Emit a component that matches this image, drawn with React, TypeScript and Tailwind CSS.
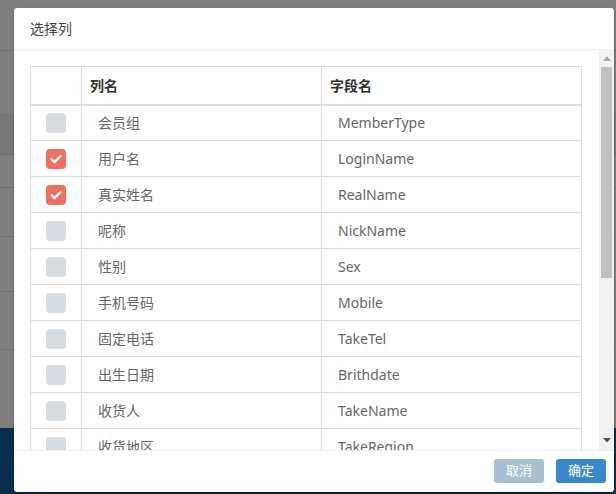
import React from "react";

const rows: Array<{ name: string; field: string; on?: boolean }> = [
  { name: "会员组", field: "MemberType" },
  { name: "用户名", field: "LoginName", on: true },
  { name: "真实姓名", field: "RealName", on: true },
  { name: "呢称", field: "NickName" },
  { name: "性别", field: "Sex" },
  { name: "手机号码", field: "Mobile" },
  { name: "固定电话", field: "TakeTel" },
  { name: "出生日期", field: "Brithdate" },
  { name: "收货人", field: "TakeName" },
  { name: "收货地区", field: "TakeRegion" },
  { name: "收货地址", field: "TakeAddress" },
  { name: "邮编", field: "TakeZip" },
];

function Check({ on }: { on?: boolean }) {
  return (
    <span className={"inline-flex w-5 h-5 rounded-[4px] items-center justify-center align-middle " + (on ? "bg-[#ef6f60]" : "bg-[#d8dde1]")}>
      {on && (
        <svg width="20" height="20" viewBox="0 0 20 20">
          <path d="M5.5 10.2l3 3L14.5 7.2" fill="none" stroke="#fff" strokeWidth="2.4" strokeLinecap="round" strokeLinejoin="round" />
        </svg>
      )}
    </span>
  );
}

export default function App() {
  return (
    <div className="relative w-[616px] h-[494px] overflow-hidden bg-[#7f7f7f]" style={{ fontFamily: '"Noto Sans", "Noto Sans CJK SC", sans-serif' }}>
      {/* page behind the overlay */}
      <div className="flex flex-col h-full">
        <div className="h-[51px] border-b border-[#6e6e6e]" />
        <div className="h-[62px]" />
        <div className="h-[42px] bg-[#787878] border-b border-[#6e6e6e]" />
        <div className="h-[33px] border-b border-[#6e6e6e]" />
        <div className="h-[49px] border-b border-[#717171]" />
        <div className="h-[55px] border-b border-[#717171]" />
        <div className="h-[58px] border-b border-[#717171]" />
        <div className="h-[78px]" />
        <div className="flex-1 bg-[#0b2d4d]" />
      </div>

      {/* modal */}
      <div className="absolute left-[14px] top-[8px] w-[600px] h-[484px] bg-white rounded-[3px] shadow-[0_1px_2px_rgba(0,0,0,0.5)] flex flex-col">
        <div className="h-[42px] px-4 flex items-center border-b border-[#eeeeee] text-[14px] text-[#444]">选择列</div>
        <div className="h-[400px] flex">
          <div className="flex-1 overflow-hidden pl-4 pr-[17px] pt-4">
            <table className="w-full border-collapse text-[14px] text-[#666]">
              <thead>
                <tr className="h-[38px] border border-[#dddddd] border-b-2">
                  <th className="w-[51px] border border-[#dddddd] border-b-2" />
                  <th className="w-[240px] border border-[#dddddd] border-b-2 text-left font-bold text-[#333] px-2">列名</th>
                  <th className="border border-[#dddddd] border-b-2 text-left font-bold text-[#333] px-2">字段名</th>
                </tr>
              </thead>
              <tbody>
                {rows.map(r => (
                  <tr key={r.field} className="h-[36px]">
                    <td className="border border-[#dddddd] text-center leading-none"><Check on={r.on} /></td>
                    <td className="border border-[#dddddd] pl-4">{r.name}</td>
                    <td className="border border-[#dddddd] pl-4">{r.field}</td>
                  </tr>
                ))}
              </tbody>
            </table>
          </div>
          {/* scrollbar */}
          <div className="w-[15px] bg-[#f1f1f1] flex flex-col items-center">
            <div className="h-[17px] flex items-center justify-center">
              <svg width="8" height="5" viewBox="0 0 8 5"><path d="M0 5L4 0.5L8 5Z" fill="#a3a3a3" /></svg>
            </div>
            <div className="w-[11px] h-[211px] bg-[#c1c1c1]" />
            <div className="flex-1" />
            <div className="h-[17px] flex items-center justify-center pb-[2px]">
              <svg width="8" height="5" viewBox="0 0 8 5"><path d="M0 0L4 4.5L8 0Z" fill="#505050" /></svg>
            </div>
          </div>
        </div>
        <div className="flex-1 border-t border-[#eceef3] flex items-start justify-end gap-3 pt-2 pr-2">
          <button className="w-[50px] h-6 rounded-[3px] bg-[#a8bfd4] text-white text-[13px]">取消</button>
          <button className="w-[50px] h-6 rounded-[3px] bg-[#3b88c9] text-white text-[13px]">确定</button>
        </div>
      </div>
    </div>
  );
}
